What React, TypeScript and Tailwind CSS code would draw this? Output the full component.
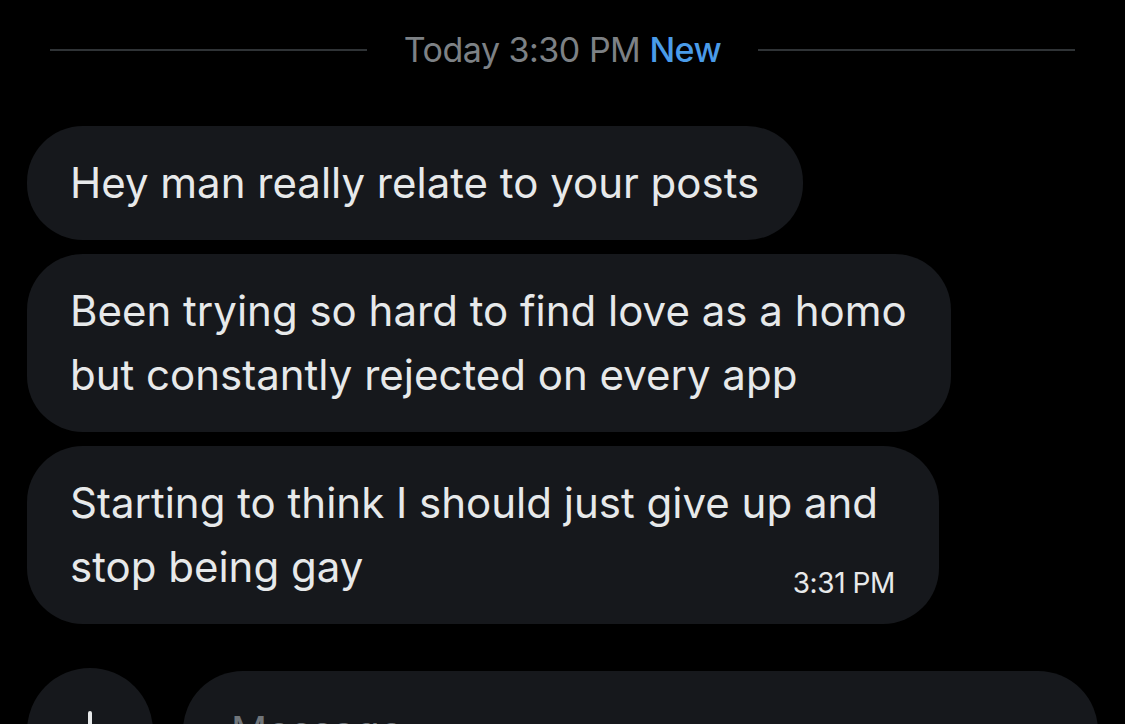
import React from "react";

const font = { fontFamily: "Inter, 'Noto Sans', sans-serif" };

function Bubble({ lines, time }: { lines: string[]; time?: string }) {
  const last = lines[lines.length - 1];
  return (
    <div className="self-start rounded-[56px] bg-[#16181c] py-[25px] pl-[43px] pr-[44px] text-[42px] leading-[64px] tracking-[0px] text-[#e7e9ea]">
      {time ? (
        <div className="w-[825px]">
          {lines.slice(0, -1).map((l) => (
            <div key={l} className="whitespace-nowrap">
              {l}
            </div>
          ))}
          <div className="flex items-end justify-between">
            <span className="whitespace-nowrap">{last}</span>
            <span className="-mb-[2px] whitespace-nowrap text-[28px] leading-[36px] tracking-[-0.4px] text-[#e7e9ea]">{time}</span>
          </div>
        </div>
      ) : (
        lines.map((l) => (
          <div key={l} className="whitespace-nowrap">
            {l}
          </div>
        ))
      )}
    </div>
  );
}

export default function App() {
  return (
    <div className="h-[724px] w-[1125px] overflow-hidden bg-black" style={font}>
      <div className="flex items-center px-[50px] pt-[28px]">
        <div className="h-[2px] flex-1 bg-[#2f3336]" />
        <div className="mx-[37px] text-[34px] leading-[44px] tracking-[-0.5px] text-[#7d8185]">
          Today 3:30 PM <span className="font-medium text-[#4a9be8]">New</span>
        </div>
        <div className="h-[2px] flex-1 bg-[#2f3336]" />
      </div>

      <div className="mt-[54px] flex flex-col gap-[14px] px-[27px]">
        <Bubble lines={["Hey man really relate to your posts"]} />
        <Bubble lines={["Been trying so hard to find love as a homo", "but constantly rejected on every app"]} />
        <Bubble lines={["Starting to think I should just give up and", "stop being gay"]} time="3:31 PM" />
      </div>

      <div className="mt-[44px] flex items-start gap-[30px] px-[27px]">
        <div className="flex h-[126px] w-[126px] shrink-0 items-center justify-center rounded-full bg-[#16181c]">
          <svg width="44" height="44" viewBox="0 0 44 44" fill="none" stroke="#e7e9ea" strokeWidth="4" strokeLinecap="round">
            <path d="M22 4v36M4 22h36" />
          </svg>
        </div>
        <div className="mt-[3px] flex h-[120px] flex-1 items-center rounded-[60px] bg-[#16181c] pl-[48px] pr-[25px]">
          <span className="text-[40px] text-[#71767b]">Message</span>
        </div>
      </div>
    </div>
  );
}
